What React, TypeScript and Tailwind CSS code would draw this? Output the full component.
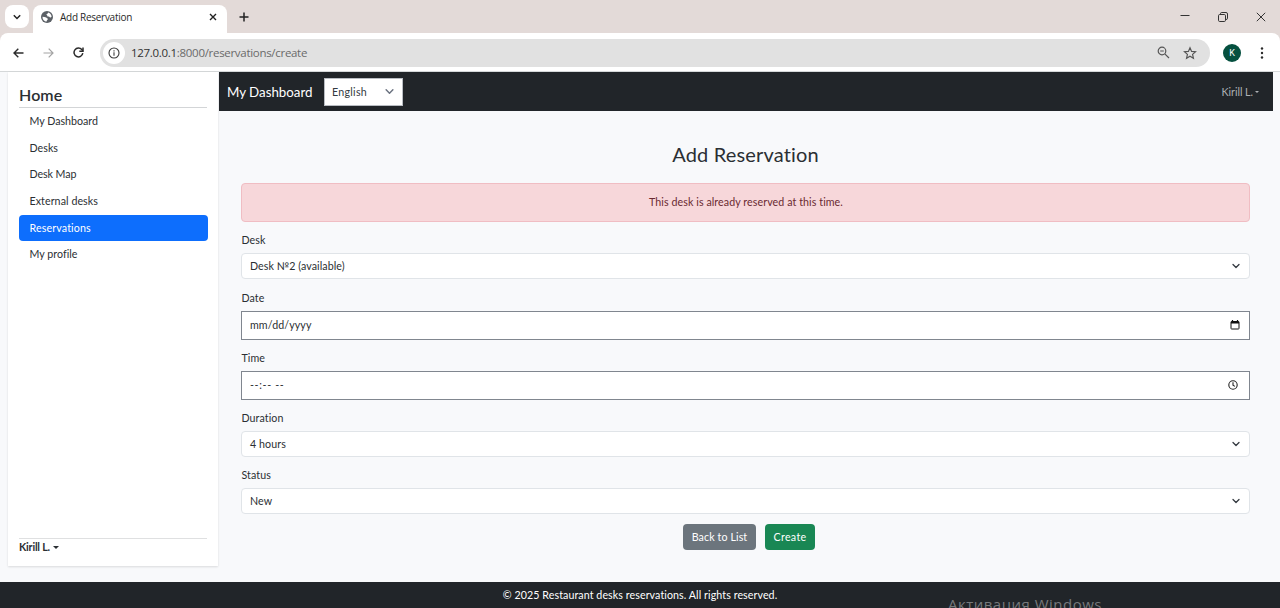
import type { ReactNode } from "react";

const navItems = [
  { label: "My Dashboard", tracking: "tracking-[-0.01px]" },
  { label: "Desks", tracking: "tracking-[0.04px]" },
  { label: "Desk Map", tracking: "tracking-[-0.08px]" },
  { label: "External desks", tracking: "tracking-[0.07px]" },
  { label: "Reservations", tracking: "tracking-[0.14px]", active: true },
  { label: "My profile", tracking: "tracking-[0.03px]" },
];

function Chevron({ className = "" }: { className?: string }) {
  return (
    <svg viewBox="0 0 16 16" className={className} fill="none" stroke="currentColor" strokeWidth="2.600" strokeLinecap="round" strokeLinejoin="round">
      <path d="m2 5 6 6 6-6" />
    </svg>
  );
}

function Caret() {
  return <span className="inline-block border-x-[3px] border-t-[3px] border-x-transparent border-t-current" />;
}

function TitleBar() {
  return (
    <div className="flex h-[33px] items-stretch bg-[#e3dad8] text-[#2a2a2a]">
      <div className="flex w-[33px] items-center justify-end pr-[4px]">
        <div className="flex h-[23px] w-[24px] items-center justify-center rounded-lg bg-white">
          <svg viewBox="0 0 8 8" className="size-[8px]" fill="none" stroke="#222" strokeWidth="1.5">
            <path d="M.8 2.3 4 5.5l3.200-3.200" />
          </svg>
        </div>
      </div>
      <div className="mt-[5px] flex w-[194px] items-center rounded-t-[8px] bg-white pb-[4px] pl-[8px]">
        <svg viewBox="0 0 24 24" className="size-[12px] shrink-0">
          <circle cx="12" cy="12" r="12" fill="#5b6066" />
          <path fill="#fff" d="M3 11.500c2.500.200 5 .3 7.500 1.500 1 .6.900 1.800 2.500 2 1.300.2 1 1.600 0 2.300-1.500 1.100-1.500 2.500-2.500 4C6 20.600 2.500 16.500 3 11.500ZM14 3c4 .8 7 4 7.200 8.500-1.200 1.500-2.700 2-3.700.8-1.200-1.400-2.500-.3-4-1.300-1.300-1-.5-2.600-2-3.200-1.200-.5-.5-2 .8-2.100 1.300 0 1.500-1.200 1.700-2.700Z" />
        </svg>
        <span className="ml-[7px] w-[149px] font-['Open_Sans',sans-serif] text-[10px] leading-[14px] tracking-[-0.28px]">Add Reservation</span>
        <svg viewBox="0 0 8 8" className="size-[8px] shrink-0" stroke="#222" strokeWidth="1.400">
          <path d="m1 1 6 6M7 1 1 7" />
        </svg>
      </div>
      <div className="flex flex-1 items-center pl-[12px]">
        <svg viewBox="0 0 10 10" className="size-[10px]" stroke="#222" strokeWidth="1.500">
          <path d="M5 .5v9M.5 5h9" />
        </svg>
      </div>
      <div className="flex items-center gap-[28px] pr-[14px]">
        <svg viewBox="0 0 10 10" className="size-[10px]" stroke="#333">
          <path d="M.5 3.500h9" />
        </svg>
        <svg viewBox="0 0 10 10" className="size-[10px]" fill="none" stroke="#333">
          <rect x=".5" y="2.500" width="7" height="7" rx="1.200" />
          <path d="M2.500 2.200V1.700q0-1.200 1.200-1.200H8q1.500 0 1.500 1.500v4.300q0 1.200-1.500 1.200" />
        </svg>
        <svg viewBox="0 0 10 10" className="size-[10px]" stroke="#333">
          <path d="m.8.8 8.400 8.400M9.200.8.8 9.200" />
        </svg>
      </div>
    </div>
  );
}

function Toolbar() {
  return (
    <div className="bg-[#e3dad8]">
      <div className="flex h-[39px] items-center rounded-t-[8px] border-b border-[#d5d8d9] bg-white pt-[1px] pl-[13px]">
        <svg viewBox="0 0 11 10" className="h-[10px] w-[11px]" fill="none" stroke="#2b2b2b" strokeWidth="1.400">
          <path d="M10.500 5H1.200M5.300.7 1 5l4.300 4.300" />
        </svg>
        <svg viewBox="0 0 11 10" className="ml-[19px] h-[10px] w-[11px]" fill="none" stroke="#a3a3a3" strokeWidth="1.200">
          <path d="M.5 5h9.300M5.700.7 10 5 5.700 9.300" />
        </svg>
        <svg viewBox="0 0 11 11" className="ml-[19px] size-[11px]" fill="none" stroke="#2b2b2b" strokeWidth="1.500">
          <path d="M9.800 6.200A4.400 4.400 0 1 1 8.800 2.600L9.800 3.700" />
          <path d="M10 .5v3.700H6.300" />
        </svg>
        <div className="ml-[16px] flex h-[28px] w-[1110px] items-center rounded-full bg-[#e1e1e1] pr-[13px] pl-[3px]">
          <div className="flex size-[22px] items-center justify-center rounded-full bg-white">
            <svg viewBox="0 0 12 12" className="size-[12px]" fill="none" stroke="#3a3a3a" strokeWidth="1.100">
              <circle cx="6" cy="6" r="5" />
              <path d="M6 5.300v3.400M6 3.200v1.200" />
            </svg>
          </div>
          <span className="ml-[6px] font-['Open_Sans',sans-serif] text-[11.500px] tracking-[-0.3px] text-[#6a6a6a]">
            <span className="text-[#303030]">127.0.0.1</span>:8000/reservations/create
          </span>
          <svg viewBox="0 0 13 13" className="ml-auto size-[13px]" fill="none" stroke="#555" strokeWidth="1.200">
            <circle cx="5" cy="5" r="3.800" />
            <path d="m7.800 7.800 4.200 4.200M3.200 5h3.600" />
          </svg>
          <svg viewBox="0 0 24 24" className="ml-[13px] size-[14px]" fill="none" stroke="#555" strokeWidth="2">
            <path d="m12 3 2.700 6.200 6.800.6-5.100 4.500 1.500 6.600L12 17.400l-5.900 3.500 1.500-6.600-5.100-4.500 6.800-.6z" />
          </svg>
        </div>
        <div className="ml-[13px] flex size-[18px] items-center justify-center rounded-full bg-[#05503f] font-['Roboto',sans-serif] text-[9px] text-white">K</div>
        <svg viewBox="0 0 4 12" className="ml-[19px] h-[12px] w-[4px]" fill="#2b2b2b">
          <circle cx="2" cy="1.500" r="1.200" />
          <circle cx="2" cy="6" r="1.200" />
          <circle cx="2" cy="10.500" r="1.200" />
        </svg>
      </div>
    </div>
  );
}

function Sidebar() {
  return (
    <aside className="ml-[8px] flex h-[494px] w-[210px] flex-col bg-white px-[11px] shadow-[0_1px_2px_rgba(0,0,0,0.12)]">
      <div className="flex h-[36px] items-end border-b border-[#d3d5d7] pb-[1px]">
        <h2 className="text-[16px] leading-[22px] font-semibold tracking-[0.1px]">Home</h2>
      </div>
      <nav className="-mr-px -ml-[0.500px] flex flex-col">
        {navItems.map((item) => (
          <a
            key={item.label}
            className={`flex h-[26.670px] items-center rounded-[4px] pb-[0.500px] pl-[11px] ${item.tracking} ${item.active ? "bg-[#0d6efd] text-white" : ""}`}
          >
            {item.label}
          </a>
        ))}
      </nav>
      <div className="mt-auto mb-[11px] flex h-[17px] items-center gap-[3px] border-t border-[#dfe0e1] font-bold">
        <span className="tracking-[-0.2px]">Kirill L.</span>
        <Caret />
      </div>
    </aside>
  );
}

function Navbar() {
  return (
    <header className="mr-[7px] flex h-[39px] items-center bg-[#212529] pr-[14px] pl-[8px] text-white">
      <span className="w-[97px] text-[13.330px] tracking-[-0.02px]">My Dashboard</span>
      <div className="flex h-[28px] w-[79px] items-center justify-between border border-[#b9bdc3] bg-white pr-[8px] pl-[7px] text-[#343a40]">
        <span className="tracking-[0.27px]">English</span>
        <Chevron className="size-[9px] text-[#6b7280]" />
      </div>
      <div className="ml-auto flex items-center gap-[2px] text-[#adb0b3]">
        <span className="tracking-[-0.04px]">Kirill L.</span>
        <span className="inline-block border-x-[2.500px] border-t-[2.500px] border-x-transparent border-t-current" />
      </div>
    </header>
  );
}

function Label({ children }: { children: ReactNode }) {
  return <label className="block h-[14px] pl-[0.500px] leading-[14px]">{children}</label>;
}

function Select({ label, value }: { label: string; value: string }) {
  return (
    <div className="h-[57.500px]">
      <Label>{label}</Label>
      <div className="mt-[6px] flex h-[26px] items-center justify-between rounded-[4px] border border-[#e0e4e8] bg-white pr-[9px] pl-[8px]">
        <span>{value}</span>
        <Chevron className="size-[8px] text-[#343a40]" />
      </div>
    </div>
  );
}

function PickerInput({ label, value, icon, tracking }: { label: string; value: string; icon: ReactNode; tracking: string }) {
  return (
    <div className="h-[60px]">
      <Label>{label}</Label>
      <div className="mt-[6px] flex h-[29px] items-center justify-between border border-[#80868f] bg-white pl-[8px]">
        <span className={`pb-px ${tracking}`}>{value}</span>
        {icon}
      </div>
    </div>
  );
}

function CalendarIcon() {
  return (
    <svg viewBox="0 0 10 10" className="mr-[9px] size-[10px]" fill="none" stroke="#111" strokeWidth="1">
      <rect x="1" y="1.500" width="8" height="7.500" rx=".6" />
      <path d="M1 2.500h8" strokeWidth="2" />
      <path d="M2.500 0v1.500M7.500 0v1.500" strokeWidth="1.200" />
    </svg>
  );
}

function ClockIcon() {
  return (
    <svg viewBox="0 0 10 10" className="mr-[11px] size-[10px]" fill="none" stroke="#222" strokeWidth="1.100">
      <circle cx="5" cy="5" r="4.200" />
      <path d="M5 2.300V5.200l1.900 1.200" />
    </svg>
  );
}

function ReservationForm() {
  return (
    <main className="ml-[22px] w-[1009px]">
      <h1 className="mt-[30px] text-center text-[20px] leading-[26px] tracking-[0.17px]">Add Reservation</h1>
      <div className="mt-[16px] flex h-[39px] items-center justify-center rounded-[4px] border border-[#f0bdc3] bg-[#f7d7da] pb-px pl-px text-[#6a2a31]">
        This desk is already reserved at this time.
      </div>
      <div className="mt-[11.400px]">
        <Select label="Desk" value="Desk №2 (available)" />
        <PickerInput label="Date" value="mm/dd/yyyy" icon={<CalendarIcon />} tracking="tracking-[0.09px]" />
        <PickerInput label="Time" value="--:-- --" icon={<ClockIcon />} tracking="tracking-[0.650px]" />
        <Select label="Duration" value="4 hours" />
        <Select label="Status" value="New" />
      </div>
      <div className="-mt-[1.500px] flex justify-center gap-[9px] pl-[7px] text-white">
        <button className="h-[26px] w-[73px] rounded-[4px] bg-[#6c757d] tracking-[0.1px]">Back to List</button>
        <button className="h-[26px] w-[50px] rounded-[4px] bg-[#198754] tracking-[0.3px]">Create</button>
      </div>
    </main>
  );
}

export default function App() {
  return (
    <div className="relative flex h-[608px] w-[1280px] flex-col overflow-hidden bg-[#f8f9fb] font-['Lato',sans-serif] text-[10.670px] leading-[16px] tracking-[0.08px] text-[#2b2f33]">
      <TitleBar />
      <Toolbar />
      <div className="flex h-[510px]">
        <Sidebar />
        <div className="ml-px flex-1">
          <Navbar />
          <ReservationForm />
        </div>
      </div>
      <footer className="flex h-[26px] items-center justify-center bg-[#212529] text-white">
        © 2025 Restaurant desks reservations. All rights reserved.
      </footer>
      <div className="absolute top-[594px] left-[948px] font-['Open_Sans',sans-serif] text-[15px] leading-[20px] tracking-[0.48px] whitespace-nowrap text-[#77797c]">
        Активация Windows
      </div>
    </div>
  );
}
